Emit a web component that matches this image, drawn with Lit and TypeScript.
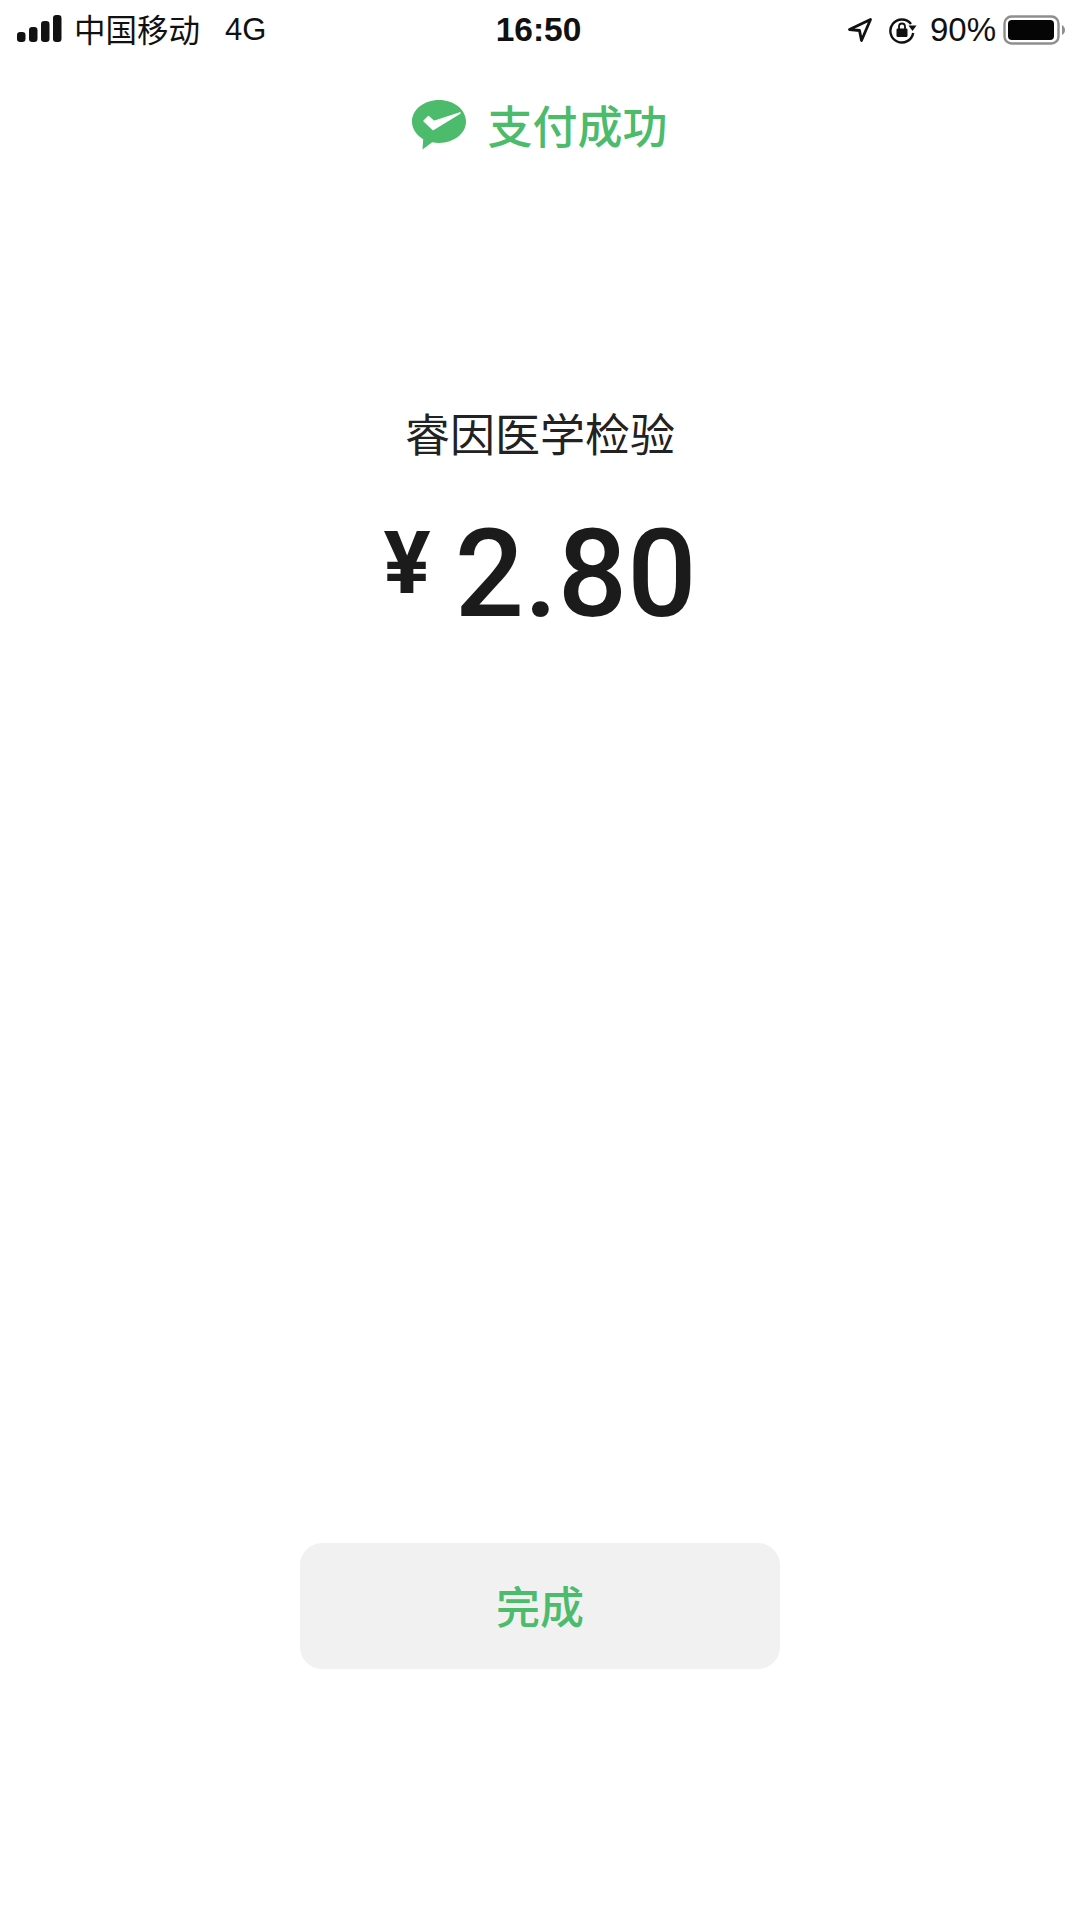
import { LitElement, html, css } from "lit";
import { customElement } from "lit/decorators.js";

@customElement("app-root")
export class AppRoot extends LitElement {
  static styles = css`
    :host {
      display: block;
      width: 1080px;
      height: 1920px;
      background: #fff;
      font-family: "Roboto", "Noto Sans CJK SC", sans-serif;
      color: #1b1b1b;
    }
    .page { display: flex; flex-direction: column; height: 1920px; }
    .status {
      display: grid;
      grid-template-columns: 1fr auto 1fr;
      align-items: center;
      height: 56px;
      padding: 0 15px 0 12px;
      font-size: 31px;
      color: #111;
    }
    .left, .right { display: flex; align-items: center; }
    .right { justify-content: flex-end; }
    .signal { margin-left: 5px; margin-top: -2px; }
    .carrier { margin-left: 12px; font-family: "Noto Sans CJK SC", sans-serif; font-size: 31.5px; line-height: 56px; padding-bottom: 3px; }
    .net { margin-left: 25px; font-family: "Liberation Sans", sans-serif; font-size: 31px; }
    .time { font-family: "Liberation Sans", sans-serif; font-weight: 700; font-size: 33.5px; }
    .pct { font-family: "Liberation Sans", sans-serif; font-size: 33px; margin-left: 13px; margin-right: 7px; }
    .lock { margin-left: 16px; }
    .title {
      display: flex;
      align-items: center;
      justify-content: center;
      gap: 21px;
      margin-top: 38px;
      height: 60px;
      font-family: "Noto Sans CJK SC", sans-serif;
      font-size: 45px;
      font-weight: 500;
      color: #4cbb6c;
    }
    .title svg { margin-top: 2px; }
    .merchant {
      margin-top: 247px;
      text-align: center;
      font-family: "Noto Sans CJK SC", sans-serif;
      font-size: 45px;
      line-height: 64px;
      color: #222;
    }
    .amount {
      display: flex;
      justify-content: center;
      align-items: flex-start;
      margin-top: 35px;
      height: 150px;
      line-height: 150px;
      font-weight: 500;
      font-size: 122px;
      color: #1b1b1b;
    }
    .yen { font-size: 88px; font-weight: 700; line-height: 126px; margin-right: 24px; }
    .spacer { flex: 1; }
    .done {
      align-self: center;
      display: flex;
      align-items: center;
      justify-content: center;
      box-sizing: border-box;
      width: 480px;
      height: 126px;
      padding-bottom: 2px;
      border-radius: 22px;
      background: #f1f1f1;
      font-family: "Noto Sans CJK SC", sans-serif;
      font-size: 44px;
      font-weight: 500;
      color: #4cbb6c;
      margin-bottom: 251px;
    }
    svg { display: block; flex: none; }
  `;

  render() {
    return html`
      <div class="page">
        <div class="status">
          <div class="left">
            <svg class="signal" width="45" height="28" viewBox="0 0 45 28" fill="#111">
              <rect x="0" y="17" width="8.5" height="10" rx="3.2" />
              <rect x="12" y="12" width="8.5" height="15" rx="3.2" />
              <rect x="24" y="6" width="8.5" height="21" rx="3.2" />
              <rect x="36" y="0" width="8.5" height="27" rx="3.2" />
            </svg>
            <span class="carrier">中国移动</span>
            <span class="net">4G</span>
          </div>
          <div class="time">16:50</div>
          <div class="right">
            <svg width="24" height="24" viewBox="0 0 24 24" fill="none" stroke="#111" stroke-width="2.8" stroke-linejoin="round">
              <path d="M1.5 11.5 L22.5 1.5 L13.5 22.5 L11.5 12.5 Z" />
            </svg>
            <svg class="lock" width="29" height="28" viewBox="0 0 29 28">
              <path d="M23 8 A11.5 11.5 0 1 0 25.2 17" fill="none" stroke="#111" stroke-width="2.4" />
              <path d="M20.5 9.5 L28.5 9.5 L24.5 15 Z" fill="#111" />
              <rect x="8.5" y="12.5" width="11" height="8.5" rx="1.2" fill="#111" />
              <path d="M11 13 V10.5 A3 3 0 0 1 17 10.5 V13" fill="none" stroke="#111" stroke-width="1.8" />
            </svg>
            <span class="pct">90%</span>
            <svg width="62" height="30" viewBox="0 0 62 30">
              <rect x="1.5" y="1.5" width="54" height="27" rx="7" fill="#fff" stroke="#8e8e8e" stroke-width="2.4" />
              <rect x="5" y="5" width="46" height="20" rx="4" fill="#050505" />
              <path d="M59 10 C61 11 62 13 62 15 C62 17 61 19 59 20 Z" fill="#8e8e8e" />
            </svg>
          </div>
        </div>
        <div class="title">
          <svg width="54" height="50" viewBox="0 0 54 50">
            <path d="M27 0 C42 0 54 9.6 54 21.6 C54 33.6 42 43 27 43 C24.6 43 22.3 42.8 20.2 42.3 L10.5 49.5 L11.2 39.2 C4.4 35.2 0 28.8 0 21.6 C0 9.6 12 0 27 0 Z" fill="#4cbb6c" />
            <path d="M12 21 L21 29.5 L48 13 L22 21.5 L16.5 16.5 Z" fill="#fff" stroke="#fff" stroke-width="1.5" stroke-linejoin="round" />
          </svg>
          <span>支付成功</span>
        </div>
        <div class="merchant">睿因医学检验</div>
        <div class="amount">
          <span class="yen">¥</span>
          <span>2.80</span>
        </div>
        <div class="spacer"></div>
        <div class="done">完成</div>
      </div>
    `;
  }
}
